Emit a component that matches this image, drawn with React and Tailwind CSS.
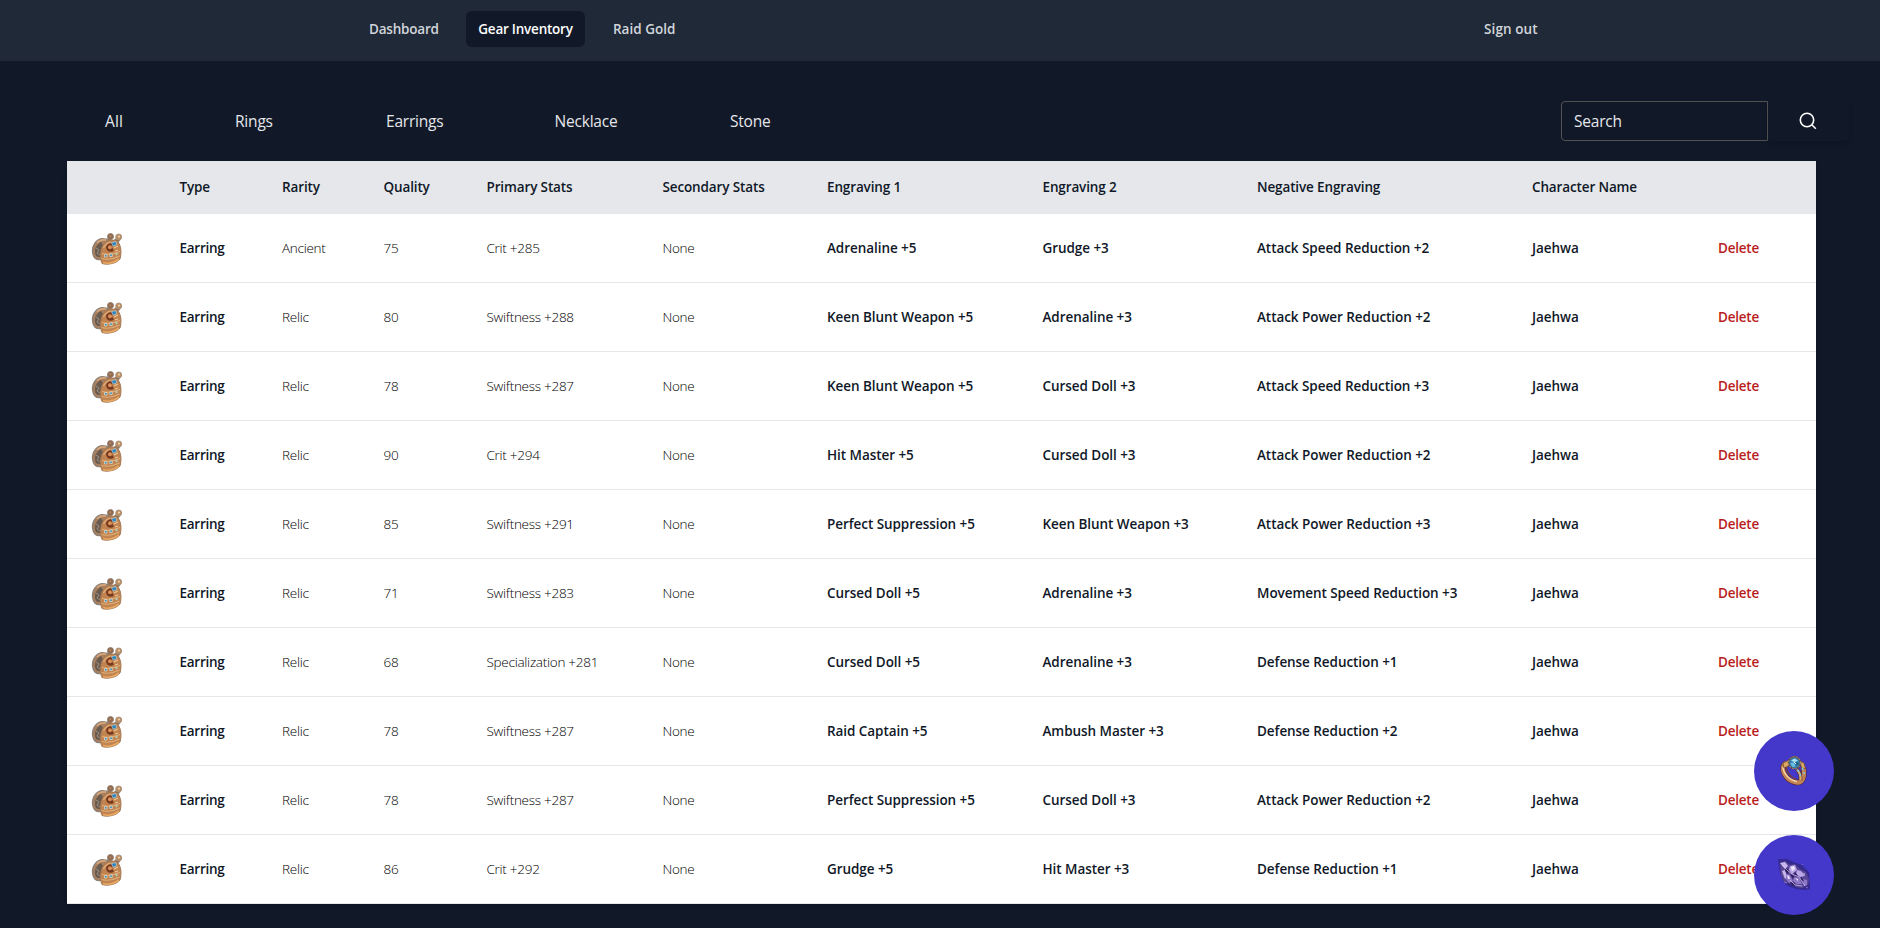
import React from 'react';

const columns = [
  ['', 'w-[88.5px]'],
  ['Type', 'w-[102.5px]'],
  ['Rarity', 'w-[101.5px]'],
  ['Quality', 'w-[103px]'],
  ['Primary Stats', 'w-[176px]'],
  ['Secondary Stats', 'w-[164.5px]'],
  ['Engraving 1', 'w-[215.5px]'],
  ['Engraving 2', 'w-[214.5px]'],
  ['Negative Engraving', 'w-[275px]'],
  ['Character Name', 'w-[186px]'],
  ['', 'w-[122px]'],
];

const rows = [
  ['Ancient', 75, 'Crit +285', 'Adrenaline +5', 'Grudge +3', 'Attack Speed Reduction +2'],
  ['Relic', 80, 'Swiftness +288', 'Keen Blunt Weapon +5', 'Adrenaline +3', 'Attack Power Reduction +2'],
  ['Relic', 78, 'Swiftness +287', 'Keen Blunt Weapon +5', 'Cursed Doll +3', 'Attack Speed Reduction +3'],
  ['Relic', 90, 'Crit +294', 'Hit Master +5', 'Cursed Doll +3', 'Attack Power Reduction +2'],
  ['Relic', 85, 'Swiftness +291', 'Perfect Suppression +5', 'Keen Blunt Weapon +3', 'Attack Power Reduction +3'],
  ['Relic', 71, 'Swiftness +283', 'Cursed Doll +5', 'Adrenaline +3', 'Movement Speed Reduction +3'],
  ['Relic', 68, 'Specialization +281', 'Cursed Doll +5', 'Adrenaline +3', 'Defense Reduction +1'],
  ['Relic', 78, 'Swiftness +287', 'Raid Captain +5', 'Ambush Master +3', 'Defense Reduction +2'],
  ['Relic', 78, 'Swiftness +287', 'Perfect Suppression +5', 'Cursed Doll +3', 'Attack Power Reduction +2'],
  ['Relic', 86, 'Crit +292', 'Grudge +5', 'Hit Master +3', 'Defense Reduction +1'],
];

function EarringIcon() {
  return (
    <svg viewBox="0 0 32 32" className="block h-8 w-8">
      <path d="M1.500 19C1 12 5 6.500 11 5.500l7 1-6 8-2 12c-5 1-8-2-8.500-7.500z" fill="#a9805f" stroke="#8a8078" strokeWidth="1.200" />
      <path d="M4 20c-.5-5 2-9 6-11l2 3-3 12c-3 .5-4.500-1-5-4z" fill="#6b5a4e" />
      <path d="M5 15l3 2-2 3 3 2" stroke="#a3968b" strokeWidth="0.900" fill="none" />
      <path d="M6 10c2-2.500 5-3.500 9-3" stroke="#d8a77b" strokeWidth="1.500" fill="none" />
      <path d="M17 4l5 4 5-4 2 3-4 5-8-2z" fill="#96704f" stroke="#8b8078" strokeWidth="0.800" />
      <circle cx="19.500" cy="3.500" r="3" fill="#94694b" stroke="#8f7d70" strokeWidth="0.900" />
      <circle cx="19.300" cy="3.200" r="1" fill="#b08f74" />
      <circle cx="27.700" cy="4" r="3" fill="#bf8e62" stroke="#a3917f" strokeWidth="0.900" />
      <circle cx="28" cy="3.600" r="1.100" fill="#ecd0ab" />
      <path d="M12.500 11.500c3-4.500 10-6 14.500-2.500 3.500 4 3.500 12 2 17-3 4-12 6.500-18 4.500C8.500 25 9 17 12.500 11.500z" fill="#c1834f" stroke="#a37a57" strokeWidth="1" />
      <path d="M11 20.500c6 1.500 12 .5 18-2M10.500 25.500c6 1.500 12 .5 18-2.500" stroke="#dfb07a" strokeWidth="1.100" fill="none" />
      <path d="M12.500 15c1.500-3.500 4-5 7-6" stroke="#e0b080" strokeWidth="1.200" fill="none" />
      <path d="M15 14c1-3 5-5 7-2.500l-1 3 2 3c-3 2.500-7.500 1.500-8-3.500z" fill="#75391f" />
      <circle cx="19" cy="14.300" r="2" fill="#dc9159" />
      <path d="M23 15l4-2M24 18l3-1" stroke="#ebc696" strokeWidth="1.200" />
      <path d="M20.500 9.500l4.500-.8.600 3-3.500 1.500z" fill="#2a84b9" stroke="#c6dce8" strokeWidth="0.600" />
      <path d="M13.500 21.500h2.500v2.500h-2.500zM18.800 21h2.500v2.500h-2.500z" fill="#358db9" stroke="#f0dfc8" strokeWidth="0.700" />
      <circle cx="25.500" cy="21" r="1.200" fill="#b5c9b8" />
      <path d="M12 29.500c5 1.500 11 .3 16-3.500" stroke="#e6a864" strokeWidth="1.600" fill="none" />
    </svg>
  );
}

function RingIcon() {
  return (
    <svg viewBox="0 0 32 32" className="block h-8 w-8">
      <path d="M8 8C1 12 7 26 18 27.500c7 .8 9-5.500 7.500-15" fill="none" stroke="#4a2b36" strokeWidth="5.400" />
      <path d="M8 8C1 12 7 26 18 27.500c7 .8 9-5.500 7.500-15" fill="none" stroke="#c58455" strokeWidth="4.200" />
      <path d="M5 12c0 6 6 13 14 14.500" fill="none" stroke="#f5d3a6" strokeWidth="1.400" />
      <path d="M8.500 12c0 5 4 10.500 10 12.500" fill="none" stroke="#7c3f31" strokeWidth="1.200" />
      <path d="M5 8l6-3 2 5-7 3zM22 6l4 2 1.500 6-4-1z" fill="#d9a865" stroke="#6a4327" strokeWidth="0.700" />
      <path d="M19 14.500c3 3 4 6 3.500 11" fill="none" stroke="#4a2b36" strokeWidth="3.600" />
      <path d="M19 14.500c3 3 4 6 3.500 11" fill="none" stroke="#dba764" strokeWidth="2.400" />
      <path d="M19.500 15l1.500 2M24 13l1.500 2M22 19l.5 2M26 17l.2 2" stroke="#7dc4e4" strokeWidth="1.500" />
      <circle cx="16.500" cy="7.700" r="6.800" fill="#5d4a4a" />
      <circle cx="16.500" cy="7.700" r="6" fill="none" stroke="#b79b72" strokeWidth="1" strokeDasharray="1.800 1.400" />
      <circle cx="16.500" cy="7.700" r="5.200" fill="#3480b0" />
      <path d="M13 5.500l3.500-2 3.500 2-3.500 1.700z" fill="#a9e2f6" />
      <path d="M12.300 8l3.700-.5 1.500 4-3 .5z" fill="#6fbfe2" />
      <path d="M18 7.500l2.800.5-2.300 3z" fill="#1d5580" />
      <path d="M16 7l2 2" stroke="#dff6ff" strokeWidth="0.900" />
    </svg>
  );
}

function StoneIcon() {
  return (
    <svg viewBox="0 0 32 32" className="block h-8 w-8">
      <path d="M0 0h9l9 4 6 2 7 7 1 17-5 1-9-1-8-3-5-5-3-8z" fill="#2a1f5e" opacity="0.550" />
      <path d="M2 4l5-2 5 4 5-1 5 5 6 3 3 7-1 6-6 3-6-1-5-3-7-2-3-7z" fill="#5a4696" />
      <path d="M2 4l5-1 3 4-3 3zM4 12l3-1 2 7-2 2z" fill="#c9b6ee" />
      <path d="M12 7l5-1 2 5-5 4-3-4zM19 11l4 1 4 5-5 1-4-3z" fill="#bba8e6" />
      <path d="M13 8l3-1 1 3-3 2z" fill="#f0e8ff" />
      <path d="M8 15l4 1 3 6-4 2-3-4zM16 18l5 1 3 6-5 0-4-3zM25 20l4 1 0 5-3 1z" fill="#8d78c8" />
      <path d="M9 16l2 1 1 3-2 0zM17 19l3 1 0 2zM24 13l3 2 0 1z" fill="#ece2ff" />
      <path d="M8 9l3 2-1 4-3-3zM12 15l4 2-1 3zM17 13l3 4-4-1zM12 23l4 1 2 3-4-1zM23 18l3 4-3-1z" fill="#2c1d59" />
      <path d="M4 6l6 6 4 3 7 3 6 9M12 21l5 5 7 1" stroke="#d8c9f6" strokeWidth="0.700" fill="none" />
      <path d="M6 23l3 1M24 6l1-1M28 28l2 1" stroke="#8d6cc4" strokeWidth="1" />
    </svg>
  );
}

function Td({ children, className = '' }) {
  return <td className={`px-6 py-0 text-left whitespace-nowrap ${className}`}>{children}</td>;
}

const strong = 'font-semibold text-[13.500px] tracking-[-0.060px] text-gray-900';
const header = 'font-semibold text-[13.500px] tracking-[-0.130px] text-gray-900';
const light = 'font-[340] text-[13.500px] tracking-[-0.270px] text-black';

export default function App() {
  return (
    <div className="h-[928px] overflow-hidden bg-[#111827] font-['Open_Sans','Noto_Sans',sans-serif]">
      <nav className="h-[61px] bg-[#1f2937] pt-[11px]">
        <div className="flex h-9 items-center pl-[357px] text-[13.500px] font-semibold text-[#d1d5db]">
          <a className="w-[109px] pl-3 tracking-[-0.200px]">Dashboard</a>
          <a className="flex h-9 w-[119px] items-center justify-center rounded-md bg-[#111827] tracking-[-0.230px] text-white">Gear Inventory</a>
          <a className="w-[899px] pl-[28px]">Raid Gold</a>
          <a className="tracking-[0.100px]">Sign out</a>
        </div>
      </nav>
      <div className="flex h-[100px] items-center pt-5 pl-[105px] text-[15.500px] tracking-[-0.200px] text-[#e5e7eb]">
        <a className="w-[130px] pt-0.5 tracking-[0.100px]">All</a>
        <a className="w-[151px] pt-0.5">Rings</a>
        <a className="w-[168.500px] pt-0.5">Earrings</a>
        <a className="w-[175.500px] pt-0.5">Necklace</a>
        <a className="w-[831px] pt-0.5">Stone</a>
        <div className="flex h-10 w-[207px] items-center rounded-l border border-[#525252] px-3 pt-0.5">Search</div>
        <button className="flex h-10 w-[81px] items-center rounded-r pl-[31px] text-white shadow-md">
          <svg viewBox="0 0 18 18" className="h-[18px] w-[18px]" fill="none" stroke="currentColor" strokeWidth="1.600">
            <circle cx="8" cy="8" r="6.700" />
            <path d="M12.800 12.800l4 4" />
          </svg>
        </button>
      </div>
      <table className="ml-[67px] w-[1749px] table-fixed border-collapse bg-white shadow-md">
        <thead>
          <tr className="h-[53px] bg-[#e5e7eb]">
            {columns.map(([label, width], i) => (
              <th key={i} className={`px-6 py-0 text-left whitespace-nowrap ${header} ${width}`}>{label}</th>
            ))}
          </tr>
        </thead>
        <tbody>
          {rows.map(([rarity, quality, primary, e1, e2, neg], i) => (
            <tr key={i} className="h-[69px] shadow-[inset_0_-1px_0_#e5e7eb]">
              <Td><EarringIcon /></Td>
              <Td className="text-[13.500px] font-semibold tracking-[-0.250px] text-gray-900">Earring</Td>
              <Td className={light}>{rarity}</Td>
              <Td className={light}>{quality}</Td>
              <Td className={light}>{primary}</Td>
              <Td className={light}>None</Td>
              <Td className={strong}>{e1}</Td>
              <Td className={strong}>{e2}</Td>
              <Td className={strong}>{neg}</Td>
              <Td className={strong}>Jaehwa</Td>
              <Td className="text-[13.500px] font-semibold tracking-[-0.230px] text-[#b91c1c]">Delete</Td>
            </tr>
          ))}
        </tbody>
      </table>
      <div className="fixed top-[731px] left-[1754px] flex flex-col gap-6">
        <button className="flex h-20 w-20 items-center justify-center rounded-full bg-[#4338ca]"><RingIcon /></button>
        <button className="flex h-20 w-20 items-center justify-center rounded-full bg-[#4338ca]"><StoneIcon /></button>
      </div>
    </div>
  );
}
